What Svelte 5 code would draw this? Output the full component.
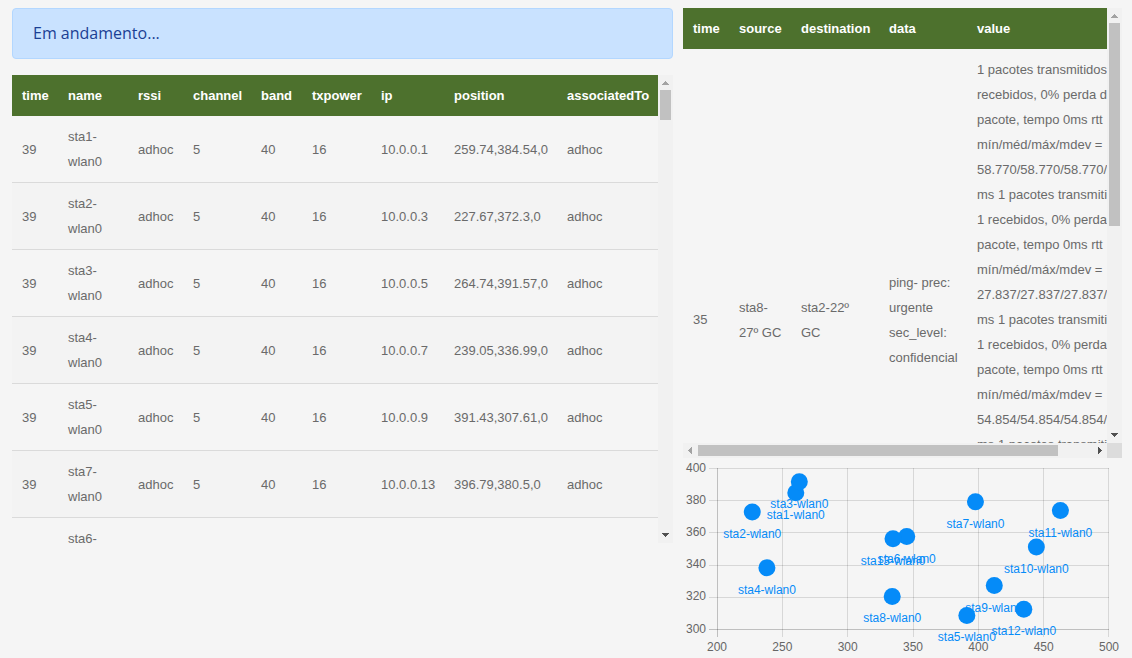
<script>
  const stationColumns = [
    { label: 'time', width: 46 },
    { label: 'name', width: 70 },
    { label: 'rssi', width: 55 },
    { label: 'channel', width: 68 },
    { label: 'band', width: 51 },
    { label: 'txpower', width: 69 },
    { label: 'ip', width: 73 },
    { label: 'position', width: 113 },
    { label: 'associatedTo', width: 101 }
  ];
  const stations = [
    ['39', 'sta1-wlan0', 'adhoc', '5', '40', '16', '10.0.0.1', '259.74,384.54,0', 'adhoc'],
    ['39', 'sta2-wlan0', 'adhoc', '5', '40', '16', '10.0.0.3', '227.67,372.3,0', 'adhoc'],
    ['39', 'sta3-wlan0', 'adhoc', '5', '40', '16', '10.0.0.5', '264.74,391.57,0', 'adhoc'],
    ['39', 'sta4-wlan0', 'adhoc', '5', '40', '16', '10.0.0.7', '239.05,336.99,0', 'adhoc'],
    ['39', 'sta5-wlan0', 'adhoc', '5', '40', '16', '10.0.0.9', '391.43,307.61,0', 'adhoc'],
    ['39', 'sta7-wlan0', 'adhoc', '5', '40', '16', '10.0.0.13', '396.79,380.5,0', 'adhoc'],
    ['', 'sta6-wlan0', '', '', '', '', '', '', '']
  ];

  const messageColumns = [
    { label: 'time', width: 46 },
    { label: 'source', width: 62 },
    { label: 'destination', width: 88 },
    { label: 'data', width: 88 },
    { label: 'value', width: 180 }
  ];
  const ping = (rtt) =>
    `1 pacotes transmitidos, 1 recebidos, 0% perda de pacote, tempo 0ms rtt mín/méd/máx/mdev = ${rtt}/${rtt}/${rtt}/0.000 ms`;
  const messages = [
    [
      '35',
      'sta8-27º GC',
      'sta2-22º GC',
      'ping- prec: urgente sec_level: confidencial',
      ['58.770', '27.837', '54.854', '54.854'].map(ping).join(' ')
    ]
  ];

  const arrows = {
    up: 'M7 6h1v1h1v1h1v1h1v1H4V9h1V8h1V7h1z',
    down: 'M4 5h7v1h-1v1H9v1H8v1H7V8H6V7H5V6H4z',
    left: 'M9 4v7H8v-1H7V9H6V8H5V7h1V6h1V5h1V4z',
    right: 'M6 4v7h1v-1h1V9h1V8h1V7H9V6H8V5H7V4z'
  };

  const xTicks = [200, 250, 300, 350, 400, 450, 500];
  const yTicks = [400, 380, 360, 340, 320, 300];
  const points = [
    { name: 'sta1-wlan0', x: 260.3, y: 384.6 },
    { name: 'sta2-wlan0', x: 227, y: 372.6 },
    { name: 'sta3-wlan0', x: 263, y: 391.5 },
    { name: 'sta4-wlan0', x: 238.2, y: 338 },
    { name: 'sta5-wlan0', x: 391.2, y: 308.4 },
    { name: 'sta6-wlan0', x: 345.2, y: 357.4 },
    { name: 'sta7-wlan0', x: 397.8, y: 379 },
    { name: 'sta8-wlan0', x: 334.1, y: 320.2 },
    { name: 'sta9-wlan0', x: 412.2, y: 327 },
    { name: 'sta10-wlan0', x: 444.4, y: 351 },
    { name: 'sta11-wlan0', x: 462.8, y: 373.6 },
    { name: 'sta12-wlan0', x: 434.8, y: 312.3 },
    { name: 'sta13-wlan0', x: 334.7, y: 356 }
  ];
  const px = (v) => 34 + ((v - 200) * 392) / 300;
  const py = (v) => 10 + ((400 - v) * 161) / 100;
  // Gridlines sit on half pixels so that they stay one pixel wide.
  const column = (v) => Math.min(Math.floor(px(v)), 425) + 0.5;
  const row = (v) => Math.round(py(v)) + 0.5;
</script>

{#snippet grid(columns, rows)}
  <table>
    <colgroup>
      {#each columns as column}<col style="width: {column.width}px" />{/each}
    </colgroup>
    <thead>
      <tr>
        {#each columns as column}<th scope="col">{column.label}</th>{/each}
      </tr>
    </thead>
    <tbody>
      {#each rows as row}
        <tr>
          {#each row as cell}<td>{cell}</td>{/each}
        </tr>
      {/each}
    </tbody>
  </table>
{/snippet}

{#snippet bar(direction, size)}
  <div class="bar {direction}" aria-hidden="true">
    <svg class="start" viewBox="0 0 15 15"><path d={direction === 'down' ? arrows.up : arrows.left} /></svg>
    <div class="track"><div class="thumb" style="flex-basis: {size}%"></div></div>
    <svg class="end" viewBox="0 0 15 15"><path d={direction === 'down' ? arrows.down : arrows.right} /></svg>
  </div>
{/snippet}

<main>
  <section class="column">
    <div class="alert" role="status">Em andamento...</div>
    <div class="scroller stations">
      <div class="view">{@render grid(stationColumns, stations)}</div>
      {@render bar('down', 6.9)}
    </div>
  </section>

  <section class="column">
    <div class="scroller messages">
      <div class="view wide">{@render grid(messageColumns, messages)}</div>
      {@render bar('down', 50)}
      {@render bar('across', 91.4)}
      <div class="corner"></div>
    </div>
    <svg class="chart" viewBox="0 0 439 200" role="img" aria-label="position">
      {#each xTicks as tick, i}
        <line class:axis={i === 0} x1={column(tick)} x2={column(tick)} y1="10" y2="179" />
        <text class="tick middle" x={px(tick)} y="193">{tick}</text>
      {/each}
      {#each yTicks as tick}
        <line class:axis={tick === 300} x1="26" x2="426" y1={row(tick)} y2={row(tick)} />
        <text class="tick end" x="23" y={Math.floor(py(tick)) + 4}>{tick}</text>
      {/each}
      {#each points as point}
        <text class="name middle" x={px(point.x)} y={py(point.y) + 26}>{point.name}</text>
      {/each}
      {#each points as point}
        <circle cx={px(point.x)} cy={py(point.y)} r="8.500" />
      {/each}
    </svg>
  </section>
</main>

<style>
  :global(body) {
    margin: 0;
    background: #f5f5f5;
  }
  main {
    display: grid;
    grid-template-columns: 661fr 439fr;
    gap: 10px;
    padding: 8px 10px 0 12px;
    font-family: 'Liberation Sans', Arial, sans-serif;
    font-size: 13px;
    line-height: 25px;
    color: #6a6a6a;
  }
  .column {
    min-width: 0;
  }
  .alert {
    margin-bottom: 16px;
    padding: 12px 20px;
    border: 1px solid #b3d7ff;
    border-radius: 4px;
    background: #c9e2ff;
    color: #1b3f94;
    font-family: 'Open Sans', sans-serif;
    font-size: 16px;
  }
  .scroller {
    display: grid;
    grid-template-columns: minmax(0, 1fr) 15px;
  }
  .stations {
    grid-template-rows: 468px;
  }
  .messages {
    grid-template-rows: 435px 15px;
  }
  .view {
    overflow: auto;
    scrollbar-width: none;
  }
  table {
    width: 100%;
    table-layout: fixed;
    border-collapse: separate;
    border-spacing: 0;
  }
  .wide table {
    width: 464px;
  }
  th,
  td {
    padding: 8px 8px 8px 10px;
    text-align: left;
    vertical-align: middle;
  }
  th {
    background: #4d712d;
    color: #fff;
  }
  td {
    border-bottom: 1px solid #dadada;
  }
  tbody tr:nth-child(even) {
    background: #f3f3f3;
  }
  .bar {
    display: flex;
    background: #f1f1f1;
  }
  .down {
    flex-direction: column;
  }
  .bar svg {
    flex: none;
    width: 15px;
    height: 15px;
  }
  .start {
    fill: #a3a3a3;
  }
  .end {
    fill: #505050;
  }
  .track {
    display: flex;
    flex: 1;
    flex-direction: inherit;
    padding: 2px 0;
  }
  .down .track {
    padding: 0 2px;
  }
  .thumb {
    background: #c1c1c1;
  }
  .corner {
    background: #dcdcdc;
  }
  .chart {
    display: block;
    width: 100%;
    font-size: 12px;
  }
  .chart line {
    stroke: rgba(0, 0, 0, 0.12);
  }
  .chart .axis {
    stroke: rgba(0, 0, 0, 0.22);
  }
  .tick {
    fill: #666;
  }
  .chart .middle {
    text-anchor: middle;
  }
  .chart text.end {
    text-anchor: end;
  }
  .name {
    fill: #058bf8;
  }
  circle {
    fill: #058bf8;
  }
</style>
